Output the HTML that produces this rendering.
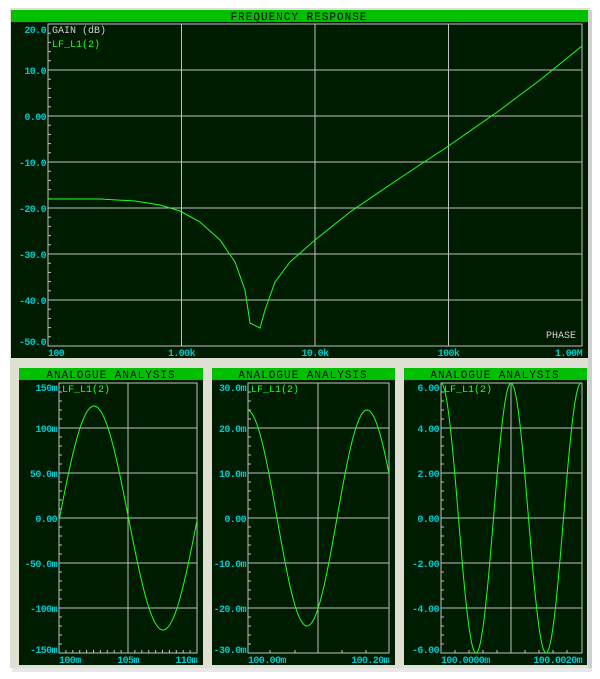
<!DOCTYPE html>
<html><head><meta charset="utf-8"><style>
body{margin:0;width:600px;height:674px;background:#fff;overflow:hidden;font-family:"Liberation Mono",monospace}
</style></head><body>
<svg id="s" width="600" height="674" xmlns="http://www.w3.org/2000/svg" font-family="Liberation Mono, monospace" font-size="10">
<rect x="10" y="8" width="580" height="660" fill="#e0dfd3"/>
<rect x="588" y="10" width="4" height="660" fill="#cfcfcf"/>
<rect x="12" y="668" width="580" height="4" fill="#e8e8e8"/>
<rect x="11" y="10" width="577" height="348" fill="#001c00"/>
<rect x="11" y="10" width="577" height="12" fill="#00c000"/>
<text x="299" y="20" text-anchor="middle" font-size="11" fill="#000" letter-spacing="1">FREQUENCY RESPONSE</text>
<g id="gtop"></g>
<rect x="19" y="368" width="184" height="297" fill="#001c00"/>
<rect x="19" y="368" width="184" height="12" fill="#00c000"/>
<text x="111" y="378" text-anchor="middle" font-size="11" fill="#000" letter-spacing="1">ANALOGUE ANALYSIS</text>
<rect x="212" y="368" width="183" height="297" fill="#001c00"/>
<rect x="212" y="368" width="183" height="12" fill="#00c000"/>
<text x="303" y="378" text-anchor="middle" font-size="11" fill="#000" letter-spacing="1">ANALOGUE ANALYSIS</text>
<rect x="404" y="368" width="183" height="297" fill="#001c00"/>
<rect x="404" y="368" width="183" height="12" fill="#00c000"/>
<text x="495" y="378" text-anchor="middle" font-size="11" fill="#000" letter-spacing="1">ANALOGUE ANALYSIS</text>
<g id="gbot"></g>
</svg>
<script>
(function(){
var ns="http://www.w3.org/2000/svg";
function el(p,t,a,txt){var e=document.createElementNS(ns,t);for(var k in a)e.setAttribute(k,a[k]);if(txt)e.textContent=txt;p.appendChild(e);return e;}
var gt=document.getElementById('gtop'),gb=document.getElementById('gbot');
var G="#c0c0c0",C="#00c8d0",L="#20ff20";
function lt(p,a,txt){a.fill=C;a['font-weight']='bold';a['letter-spacing']='-0.6';return el(p,'text',a,txt);}
var X0=48,X1=582,Y0=24,Y1=346;
el(gt,'rect',{x:X0,y:Y0,width:X1-X0,height:Y1-Y0,fill:'none',stroke:G});
var lab=["20.0","10.0","0.00","-10.0","-20.0","-30.0","-40.0","-50.0"];
for(var i=0;i<8;i++){var y=Y0+i*46;if(i>0&&i<7)el(gt,'line',{x1:X0,x2:X1,y1:y,y2:y,stroke:G});
var ty=i==0?y+9:(i==7?y-1:y+4);
lt(gt,{x:46,y:ty,'text-anchor':'end'},lab[i]);
for(var j=1;j<5&&i<7;j++)el(gt,'line',{x1:X0,x2:X0+3,y1:y+j*9.2,y2:y+j*9.2,stroke:G});}
var xl=["100","1.00k","10.0k","100k","1.00M"];
for(var i=0;i<5;i++){var x=X0+i*133.5;if(i>0&&i<4)el(gt,'line',{x1:x,x2:x,y1:Y0,y2:Y1,stroke:G});
lt(gt,{x:x,y:356,'text-anchor':i==0?'start':(i==4?'end':'middle')},xl[i]);}
el(gt,'text',{x:52,y:33,fill:'#d0d0d0'},"GAIN (dB)");
el(gt,'text',{x:52,y:47,fill:L},"LF_L1(2)");
el(gt,'text',{x:576,y:338,'text-anchor':'end',fill:'#d0d0d0'},"PHASE");
el(gt,'path',{d:"M48 199 L100 199 L135 201 L160 205 L180 211 L200 222 L220 240 L235 262 L245 290 L250 323 L260 328 L265 310 L275 282 L290 262 L315 240 L350 212 L400 178 L450 145 L500 110 L540 80 L582 46",fill:'none',stroke:L});
function panel(x0,x1,labs,xlab,vx,f,xt){
 var y0=383,y1=653;
 el(gb,'rect',{x:x0,y:y0,width:x1-x0,height:y1-y0,fill:'none',stroke:G});
 for(var i=0;i<7;i++){var y=y0+i*45;if(i>0&&i<6)el(gb,'line',{x1:x0,x2:x1,y1:y,y2:y,stroke:G});
  var ty=i==0?y+8:(i==6?y:y+4);
  lt(gb,{x:x0-2,y:ty,'text-anchor':'end'},labs[i]);
  for(var j=1;j<5&&i<6;j++)el(gb,'line',{x1:x0,x2:x0+3,y1:y+j*9,y2:y+j*9,stroke:G});}
 vx.forEach(function(v){el(gb,'line',{x1:v,x2:v,y1:y0,y2:y1,stroke:G});});
 xt.forEach(function(v){el(gb,'line',{x1:v,x2:v,y1:y1-3,y2:y1,stroke:G});});
 lt(gb,{x:x0,y:663},xlab[0]);
 lt(gb,{x:x1,y:663,'text-anchor':'end'},xlab[1]);
 if(xlab[2])lt(gb,{x:vx[0],y:663,'text-anchor':'middle'},xlab[2]);
 el(gb,'text',{x:x0+3,y:y0+9,fill:L},"LF_L1(2)");
 var d="";for(var x=x0;x<=x1;x++){d+=(x==x0?"M":"L")+x+" "+f(x).toFixed(1)+" ";}
 el(gb,'path',{d:d,fill:'none',stroke:L});
}
var t1=[];for(var k=1;k<20;k++)t1.push(59+k*6.9);
panel(59,197,["150m","100m","50.0m","0.00","-50.0m","-100m","-150m"],["100m","110m","105m"],[128],function(x){return 518-112*Math.cos(2*Math.PI*(x-94)/138);},t1);
panel(248,389,["30.0m","20.0m","10.0m","0.00","-10.0m","-20.0m","-30.0m"],["100.00m","100.20m"],[318],function(x){return 518-108*Math.cos(2*Math.PI*(x-367)/120);},[270,295,342,366]);
panel(441,582,["6.00","4.00","2.00","0.00","-2.00","-4.00","-6.00"],["100.0000m","100.0020m"],[511],function(x){return 518-135*Math.cos(2*Math.PI*(x-511)/70);},[455,469,483,497,525,539,553,567]);
})();
</script>
</body></html>
